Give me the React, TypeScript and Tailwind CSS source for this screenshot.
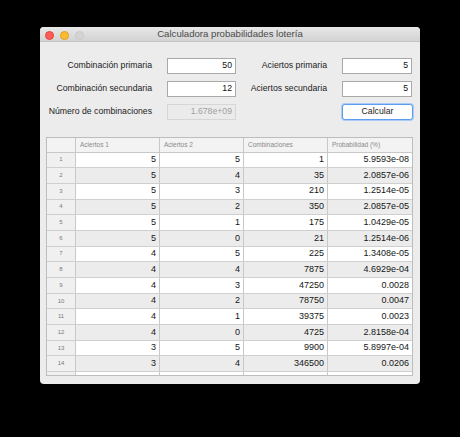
const rows: [number, number, number, string][] = [
  [5, 5, 1, "5.9593e-08"],
  [5, 4, 35, "2.0857e-06"],
  [5, 3, 210, "1.2514e-05"],
  [5, 2, 350, "2.0857e-05"],
  [5, 1, 175, "1.0429e-05"],
  [5, 0, 21, "1.2514e-06"],
  [4, 5, 225, "1.3408e-05"],
  [4, 4, 7875, "4.6929e-04"],
  [4, 3, 47250, "0.0028"],
  [4, 2, 78750, "0.0047"],
  [4, 1, 39375, "0.0023"],
  [4, 0, 4725, "2.8158e-04"],
  [3, 5, 9900, "5.8997e-04"],
  [3, 4, 346500, "0.0206"],
  [3, 3, 2079000, "0.1239"],
];

function Field({ value, disabled }: { value: string; disabled?: boolean }) {
  return (
    <div
      className={
        disabled
          ? "flex h-[16px] items-center justify-end border border-[#d6d6d6] bg-[#ebebeb] px-[3px] text-[#a0a0a0]"
          : "flex h-[16px] items-center justify-end border border-[#a9a9a9] bg-white px-[3px] text-[#111]"
      }
    >
      {value}
    </div>
  );
}

export default function App() {
  return (
    <div
      className="h-[437px] w-[460px] bg-black pl-[40px] pt-[27px]"
      style={{ fontFamily: '"Liberation Sans", Arial, sans-serif' }}
    >
      <div className="flex h-[357px] w-[380px] flex-col overflow-hidden rounded-[4px] bg-[#ececec]">
        {/* Title bar */}
        <div className="relative flex h-[15px] shrink-0 items-center justify-center border-b border-[#c4c4c4] bg-gradient-to-b from-[#e8e8e8] to-[#d3d3d3]">
          <div className="absolute left-[5px] top-[3.5px] flex gap-[6px]">
            <span className="h-[9px] w-[9px] rounded-full border border-[#e0443e] bg-[#fd5c56]" />
            <span className="h-[9px] w-[9px] rounded-full border border-[#dea123] bg-[#fdbb2e]" />
            <span className="h-[9px] w-[9px] rounded-full border border-[#c8c8c8] bg-[#d4d4d4]" />
          </div>
          <span className="text-[9.6px] text-[#4a4a4a]">Calculadora probabilidades lotería</span>
        </div>

        {/* Form */}
        <div className="mt-[16px] flex flex-col gap-[7px] text-[8.7px] text-[#1b1b1b]">
          <div className="flex items-center">
            <span className="w-[112px] text-right">Combinación primaria</span>
            <div className="ml-[15px] w-[69px]">
              <Field value="50" />
            </div>
            <span className="w-[91px] text-right">Aciertos primaria</span>
            <div className="ml-[15px] w-[70px]">
              <Field value="5" />
            </div>
          </div>
          <div className="flex items-center">
            <span className="w-[112px] text-right">Combinación secundaria</span>
            <div className="ml-[15px] w-[69px]">
              <Field value="12" />
            </div>
            <span className="w-[91px] text-right">Aciertos secundaria</span>
            <div className="ml-[15px] w-[70px]">
              <Field value="5" />
            </div>
          </div>
          <div className="flex items-center">
            <span className="w-[112px] text-right">Número de combinaciones</span>
            <div className="ml-[15px] w-[69px]">
              <Field value="1.678e+09" disabled />
            </div>
            <div className="ml-[106px] flex h-[16px] w-[71px] items-center justify-center rounded-[3px] border border-[#5c9ded] bg-white shadow-[0_0_0_1px_#a9cbf5]">
              Calcular
            </div>
          </div>
        </div>

        {/* Table */}
        <div className="ml-[6px] mt-[17px] h-[239px] w-[367px] overflow-hidden border border-[#bdbdbd] bg-white">
          <div className="flex h-[14.5px] border-b border-[#c8c8c8] bg-[#f3f3f3] text-[6.5px] text-[#8a8a8a]">
            <div className="w-[29px] border-r border-[#c8c8c8]" />
            {["Aciertos 1", "Aciertos 2", "Combinaciones", "Probabilidad (%)"].map((h, i) => (
              <div
                key={h}
                className={
                  i === 3
                    ? "flex w-[84px] items-center pl-[4px]"
                    : "flex w-[84px] items-center border-r border-[#c8c8c8] pl-[4px]"
                }
              >
                {h}
              </div>
            ))}
          </div>
          {rows.map((r, i) => (
            <div
              key={i}
              className={
                i % 2 === 0
                  ? "flex h-[15.7px] border-b border-[#cfcfcf] bg-white text-[9px] text-[#161616]"
                  : "flex h-[15.7px] border-b border-[#cfcfcf] bg-[#ececec] text-[9px] text-[#161616]"
              }
            >
              <div className="flex w-[29px] items-center justify-center border-r border-[#c8c8c8] bg-[#f0f0f0] text-[6px] text-[#7a7a7a]">
                {i + 1}
              </div>
              <div className="flex w-[84px] items-center justify-end border-r border-[#c8c8c8] pr-[3px]">{r[0]}</div>
              <div className="flex w-[84px] items-center justify-end border-r border-[#c8c8c8] pr-[3px]">{r[1]}</div>
              <div className="flex w-[84px] items-center justify-end border-r border-[#c8c8c8] pr-[3px]">{r[2]}</div>
              <div className="flex w-[84px] items-center justify-end pr-[3px]">{r[3]}</div>
            </div>
          ))}
        </div>
      </div>
    </div>
  );
}
